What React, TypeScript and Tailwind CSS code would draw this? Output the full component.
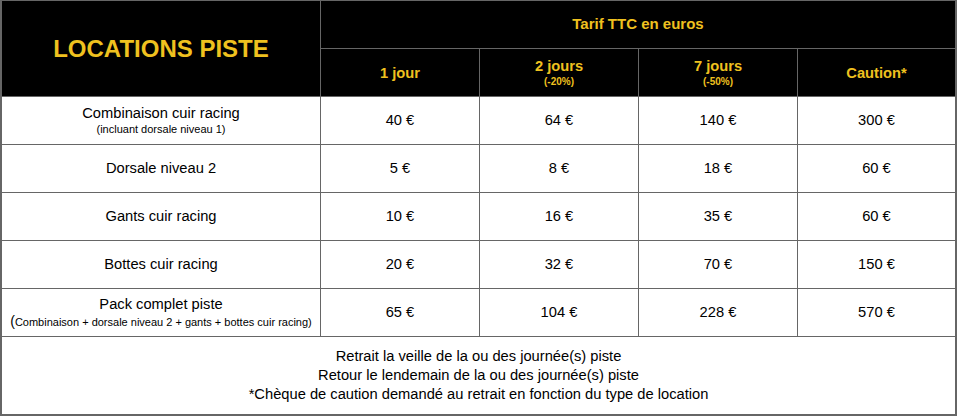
const rows = [
  {
    name: "Combinaison cuir racing",
    note: "(incluant dorsale niveau 1)",
    prices: ["40 €", "64 €", "140 €", "300 €"],
  },
  { name: "Dorsale niveau 2", prices: ["5 €", "8 €", "18 €", "60 €"] },
  { name: "Gants cuir racing", prices: ["10 €", "16 €", "35 €", "60 €"] },
  { name: "Bottes cuir racing", prices: ["20 €", "32 €", "70 €", "150 €"] },
  {
    name: "Pack complet piste",
    pack: true,
    prices: ["65 €", "104 €", "228 €", "570 €"],
  },
];

const heads = [
  { label: "1 jour" },
  { label: "2 jours", sub: "(-20%)" },
  { label: "7 jours", sub: "(-50%)" },
  { label: "Caution*" },
];

export default function App() {
  return (
    <div
      className="w-[957px] h-[416px] bg-white text-black"
      style={{ fontFamily: '"Liberation Sans", Arial, sans-serif' }}
    >
      <div className="grid grid-cols-[319px_159px_159px_159px_157px] border-t border-l-2 border-r-2 border-b-2 border-[#666]">
        {/* header */}
        <div className="row-span-2 flex h-[96px] items-center justify-center border-r border-b border-[#666] bg-black text-[24px] font-bold text-[#efc11f]">
          LOCATIONS PISTE
        </div>
        <div className="col-span-4 flex h-[48px] items-center justify-center border-b border-[#666] bg-black text-[15px] font-bold text-[#efc11f]">
          Tarif TTC en euros
        </div>
        {heads.map((h, i) => (
          <div
            key={h.label}
            className={`flex h-[48px] flex-col items-center justify-center border-b border-[#666] bg-black font-bold text-[#efc11f] ${
              i < 3 ? "border-r" : ""
            }`}
          >
            <span className="text-[14.7px] leading-[18px]">{h.label}</span>
            {h.sub && <span className="text-[10px] leading-[13px]">{h.sub}</span>}
          </div>
        ))}

        {/* body */}
        {rows.map((r) => (
          <div key={r.name} className="contents">
            <div className="flex h-[48px] flex-col items-center justify-center border-r border-b border-[#666]">
              <span className="text-[14.7px] leading-[17px]">{r.name}</span>
              {r.note && <span className="text-[11px] leading-[15px]">{r.note}</span>}
              {r.pack && (
                <span className="text-[11px] leading-[16px] whitespace-nowrap">
                  <span className="text-[14px]">(</span>Combinaison + dorsale niveau 2 + gants + bottes cuir racing)
                </span>
              )}
            </div>
            {r.prices.map((p, i) => (
              <div
                key={i}
                className={`flex h-[48px] items-center justify-center border-b border-[#666] text-[14.7px] ${
                  i < 3 ? "border-r" : ""
                }`}
              >
                {p}
              </div>
            ))}
          </div>
        ))}

        {/* footer */}
        <div className="col-span-5 flex h-[77px] flex-col items-center justify-center text-[14.7px] leading-[19px]">
          <span>Retrait la veille de la ou des journée(s) piste</span>
          <span>Retour le lendemain de la ou des journée(s) piste</span>
          <span>*Chèque de caution demandé au retrait en fonction du type de location</span>
        </div>
      </div>
    </div>
  );
}
